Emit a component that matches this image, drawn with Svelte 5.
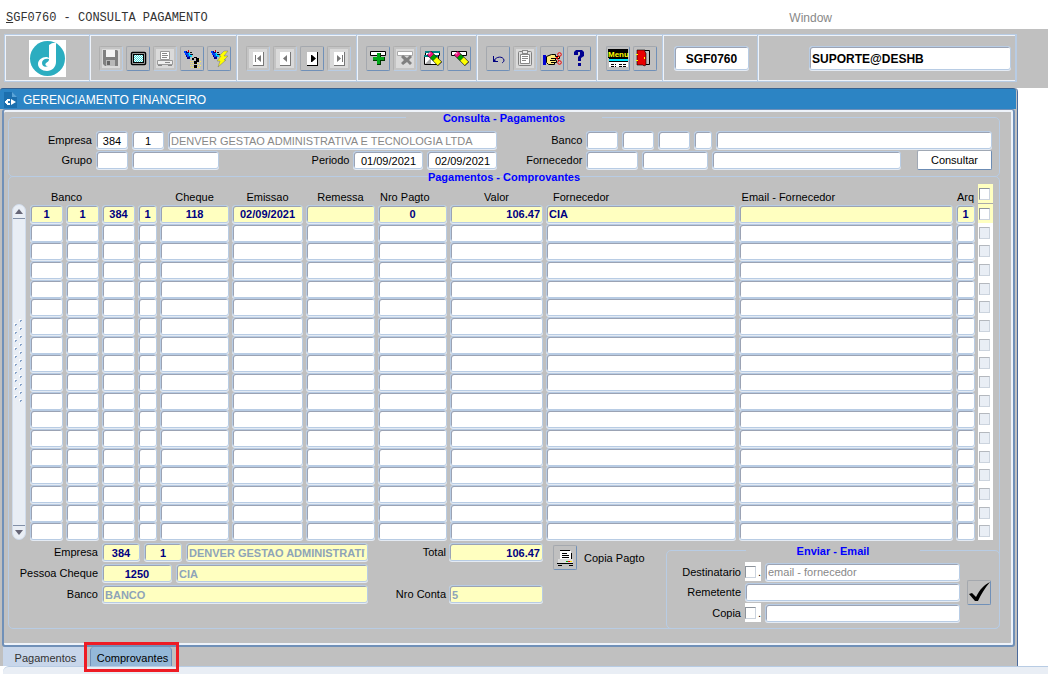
<script lang="ts">
	type Tool = { name: string; icon: string; off?: boolean };

	const brush =
		'<path d="M4 5h3v1h2v2h3v3h-2v2H7v-2H6V9H5V7H4z" fill="#000080"/><path d="M4 5h2v2h2v2h1v2H7V9H5V7H4z" fill="#0040ff"/><path d="M8 7h2v2h2v2h-1l-2-1z" fill="#00e0ff"/><path d="M8 4h1v2H8z" fill="#e00000"/><path d="M10 6h2v1h-2zM11 8h2v1h-2z" fill="#111"/>';
	const page = '<path d="M7 6h10v13H7z" fill="#fff"/><path d="M17 6h1v14H7v-1h10z" fill="#777"/>';
	const pencil =
		'<path d="M9 7l11 11" stroke="#111" stroke-width="6"/><path d="M9 7l3 3" stroke="#f0107e" stroke-width="5"/><path d="M9 7l1 1" stroke="#ff9ad0" stroke-width="2"/><path d="M12 10l3 3" stroke="#00a000" stroke-width="5"/><path d="M15 13l4.500 4.500" stroke="#ff0" stroke-width="5"/>';

	const groups: Tool[][] = [
		[
			{
				name: 'Salvar',
				off: true,
				icon: '<path d="M4 4h14l1 1v15H6l-2-2z" fill="#808080"/><path d="M7 4h9v7H7z" fill="#f4f4f4"/><path d="M7 14h9v6H7z" fill="#b8b8b8"/><path d="M8 15h3v4H8z" fill="#666"/>'
			},
			{
				name: 'Tela',
				icon: '<rect x="5.500" y="6.500" width="14" height="12" rx="1" fill="#c8c8c8" stroke="#000" stroke-width="1.500"/><rect x="7.500" y="8.500" width="10" height="8" fill="#fff" stroke="#000"/><path d="M8 9.500h9M8 11.500h9M8 13.500h9M8 15.500h9" stroke="#40d8d8" stroke-dasharray="1 1"/><path d="M9 10.500h8M9 12.500h8M9 14.500h8" stroke="#40d8d8" stroke-dasharray="1 1"/>'
			},
			{
				name: 'Imprimir',
				off: true,
				icon: '<path d="M7.500 5.500h9v8h-9z" fill="#fff" stroke="#999"/><path d="M9 7h5v1H9zM9 9h6v1H9zM9 11h5v1H9z" fill="#888"/><path d="M4.500 14.500h15v4h-15z" fill="#eee" stroke="#999"/><path d="M12 16h5v1h-5zM5 19h4v1H5zM15 19h4v1h-4z" fill="#888"/>'
			},
			{
				name: 'Entrar consulta',
				icon: `<path d="M10 15.500h11M11 17.500h10M10 19.500h11M11 21.500h9M17 13.500h4" stroke="#ffee55" stroke-dasharray="1 1"/>${brush}<path d="M12 12h2v-1h3v1h2v4h-2v2h-3v-3h2v-3h-2v2h-2zM14 19h3v3h-3z" fill="#000"/>`
			},
			{
				name: 'Executar consulta',
				icon: `${brush}<path d="M17 5h4l-4 5h4l-4 4h2l-8 7 2-6h-3l4-5h-2z" fill="#ff0" stroke="#777" stroke-width=".5"/>`
			}
		],
		[
			{ name: 'Primeiro', off: true, icon: `${page}<path d="M9 9h1v7H9zM15 9v7l-4-3.500z" fill="#777"/>` },
			{ name: 'Anterior', off: true, icon: `${page}<path d="M14 9v7l-4-3.500z" fill="#777"/>` },
			{ name: 'Proximo', icon: `${page}<path d="M17 6h1v14H7v-1h10zM11 9h1l4 3.500-4 3.500h-1z" fill="#000"/>` },
			{ name: 'Ultimo', off: true, icon: `${page}<path d="M10 9l4 3.500-4 3.500zM15 9h1v7h-1z" fill="#777"/>` }
		],
		[
			{
				name: 'Inserir registro',
				icon: '<path d="M4.500 5.500h15v4h-15z" fill="#fff" stroke="#000"/><path d="M11 7h4v4h4v4h-4v4h-4v-4H7v-4h4z" fill="#003800"/><path d="M11 7h3v4h4v3h-4v4h-3v-4H7v-3h4z" fill="#00a818"/>'
			},
			{
				name: 'Remover registro',
				off: true,
				icon: '<path d="M4.500 5.500h15v4h-15z" fill="#fff" stroke="#aaa"/><path d="M10 9l4 3 3-3 2 2-3 3 3 3-2 2-3-3-4 3-2-2 3-3-3-3z" fill="#808080"/>'
			},
			{
				name: 'Limpar bloco',
				icon: `<path d="M5.500 5.500h14v4h-14zM4.500 9.500h14v9h-14z" fill="#fff" stroke="#000"/><path d="M5 5h15v2H5zM4 9h14v2H4z" fill="#008080"/><path d="M5 18l6-6v6z" fill="#aaa"/>${pencil}`
			},
			{
				name: 'Limpar registro',
				icon: `<path d="M4.500 5.500h15v4h-15z" fill="#fff" stroke="#000"/>${pencil}`
			}
		],
		[
			{
				name: 'Desfazer',
				icon: '<path d="M7.500 10v5.500H12M8 15c2-5 9-5 10-1 0 2-1 2-2 3" fill="none" stroke="#000080"/><path d="M7 12l4 4H7z" fill="#000080"/>'
			},
			{
				name: 'Colar',
				off: true,
				icon: '<rect x="5.500" y="5.500" width="13" height="14" rx="1" fill="#e0e0e0" stroke="#808080"/><path d="M7.500 8.500h9v9h-9z" fill="#fff" stroke="#888"/><path d="M9 4h6v4H9z" fill="#888"/><path d="M10 5h4v2h-4z" fill="#eee"/><path d="M9 10h6v1H9zM9 12h6v1H9zM9 14h4v1H9z" fill="#888"/>'
			},
			{
				name: 'Recortar',
				icon: '<path d="M3 9h3v10H3z" fill="#0000d0"/><path d="M6.500 10.500l5-2h4v2h4v2h-4v2h1v2h-2v2h-6l-2-2z" fill="#ffe97a" stroke="#000"/><path d="M11 12.500h5M10 14.500h5M11 16.500h4" stroke="#000"/><path d="M16 13l3-3M16 11l3 4" stroke="#e00" fill="none"/><circle cx="19.500" cy="8.500" r="1.800" fill="none" stroke="#e00"/><circle cx="19.500" cy="16.500" r="1.800" fill="none" stroke="#e00"/>'
			},
			{
				name: 'Ajuda',
				icon: '<path d="M7 9V6l2-2h6l2 2v4l-3 2v3h-3v-4l2-2V6h-2v3zM11 17h3v3h-3z" fill="#000090"/>'
			}
		],
		[
			{
				name: 'Menu',
				icon: '<path d="M2 3h20v9H2z" fill="#000"/><text x="2" y="11" font-family="Liberation Sans, sans-serif" font-size="8" font-weight="700" fill="#ff0">Menu</text><path d="M3 13h19v8H3z" fill="#fff"/><path d="M3 13h19v2H3z" fill="#00e8ff"/><path d="M3 12h19v1H3zM3 15h19v1H3z" fill="#000"/><path d="M5 18.500h5M13 18.500h8M5 20.500h5M13 20.500h8" stroke="#000" stroke-dasharray="3 1"/>'
			},
			{
				name: 'Sair',
				icon: '<path d="M5.500 4.500h11v14h-11z" fill="#c0c0c0" stroke="#000"/><path d="M4 4h8v2l1 1v12l-2 1-1-1H4z" fill="#e80000" stroke="#000" stroke-width=".6"/><path d="M3 8h2v1H3zM3 14h2v1H3zM11 11h1v2h-1z" fill="#ff0"/>'
			}
		]
	];

	const rows = Array.from({ length: 18 }, (_, i) =>
		i === 0
			? ['1', '1', '384', '1', '118', '02/09/2021', '', '0', '106.47', 'CIA', '', '1']
			: Array(12).fill('')
	);
	const columns = [
		'Banco', 'Agencia', 'Conta', 'Digito', 'Cheque', 'Emissao', 'Remessa',
		'Nro Pagto', 'Valor', 'Fornecedor', 'Email', 'Arq'
	];
</script>

<header class="menubar">
	<span class="app-name"><u>S</u>GF0760 - CONSULTA PAGAMENTO</span>
	<span class="window-menu">Window</span>
</header>

<div class="toolbar">
	<div class="toolbar-frame">
		<div class="cell logo">
			<svg width="37" height="37" viewBox="0 0 37 37">
				<rect width="37" height="37" fill="#fff" />
				<circle cx="18.500" cy="18.500" r="17.500" fill="#2badc0" />
				<path d="M20 5q4-3 7-2v19c0 5-4 9-9 9s-9-3-9-7 4-7 8-7c1 0 2 0 3 1z" fill="#fff" />
				<path d="M20 19c-4-1-7 1-7 4s3 5 6 3c-3 0-3-2-2-3s3-1 3-4z" fill="#2badc0" />
			</svg>
		</div>
		{#each groups as group}
			<div class="cell tools">
				{#each group as tool}
					<button class="tool" class:off={tool.off} disabled={tool.off} aria-label={tool.name}>
						<svg width="22" height="23" viewBox="1 1 22 23">{@html tool.icon}</svg>
					</button>
				{/each}
			</div>
		{/each}
		<div class="cell code"><input class="field" aria-label="Programa" value="SGF0760" /></div>
		<div class="cell user"><input class="field" aria-label="Usuario" value="SUPORTE@DESHB" /></div>
	</div>
</div>

<main class="window">
	<div class="titlebar">
		<svg width="13" height="16" viewBox="0 0 13 16">
			<path d="M0 0h8l5 5v11H0z" fill="#1c6fae" />
			<path d="M8 0v5h5z" fill="#5aa4d8" />
			<path d="M6 7H3v1H2v1H1v2h1v1h1v1h3v-2H4V9h2zM7 7l5 3-5 3z" fill="#fff" />
		</svg>
		<span>GERENCIAMENTO FINANCEIRO</span>
	</div>

	<div class="canvas">
		<fieldset class="query">
			<legend>Consulta - Pagamentos</legend>
			<div class="query-grid">
				<div class="line">
					<label class="first" for="empresa">Empresa</label>
					<input id="empresa" class="field w32 center" value="384" />
					<input class="field w32 center" aria-label="Filial" value="1" />
					<input
						class="field grow muted"
						aria-label="Nome da empresa"
						value="DENVER GESTAO ADMINISTRATIVA E TECNOLOGIA LTDA"
					/>
				</div>
				<div class="line">
					<label class="second" for="banco">Banco</label>
					<input id="banco" class="field w32" />
					<input class="field w32" aria-label="Agencia" />
					<input class="field w32" aria-label="Conta" />
					<input class="field w18" aria-label="Digito" />
					<input class="field grow" aria-label="Nome do banco" />
				</div>
				<div class="line">
					<label class="first" for="grupo">Grupo</label>
					<input id="grupo" class="field w32" />
					<input class="field w87" aria-label="Nome do grupo" />
					<label class="grow" for="periodo">Periodo</label>
					<input id="periodo" class="field w70 center" value="01/09/2021" />
					<input class="field w70 center" aria-label="Fim do periodo" value="02/09/2021" />
				</div>
				<div class="line">
					<label class="second" for="fornecedor">Fornecedor</label>
					<input id="fornecedor" class="field w52" />
					<input class="field w66" aria-label="Filial do fornecedor" />
					<input class="field grow" aria-label="Nome do fornecedor" />
					<button class="consult">Consultar</button>
				</div>
			</div>
		</fieldset>

		<fieldset class="receipts">
			<legend>Pagamentos - Comprovantes</legend>
			<div class="listing">
				<div class="scroll">
					<button aria-label="Subir">
						<svg width="8" height="5" viewBox="0 0 8 5"><path d="M0 5h8L4 0z" fill="#667" /></svg>
					</button>
					<svg class="grip" width="10" height="84">
						<defs>
							<pattern id="dots" width="10" height="8" patternUnits="userSpaceOnUse">
								<path d="M5 0h2v2H5zM0 4h2v2H0z" fill="#fff" />
								<path d="M6 1h2v1H6zM6 2h1v1H6zM1 5h2v1H1zM1 6h1v1H1z" fill="#86a2c8" />
							</pattern>
						</defs>
						<rect width="10" height="84" fill="url(#dots)" />
					</svg>
					<button class="down" aria-label="Descer">
						<svg width="8" height="5" viewBox="0 0 8 5"><path d="M0 0h8L4 5z" fill="#667" /></svg>
					</button>
				</div>
				<table>
					<colgroup>
						<col class="c36" /><col class="c36" /><col class="c36" /><col class="c22" />
						<col class="c72" /><col class="c74" /><col class="c72" /><col class="c72" />
						<col class="c96" /><col class="supplier" /><col /><col class="c22" /><col class="c15" />
					</colgroup>
					<thead>
						<tr>
							<th colspan="4" class="bank">Banco</th>
							<th>Cheque</th>
							<th>Emissao</th>
							<th>Remessa</th>
							<th class="number">Nro Pagto</th>
							<th>Valor</th>
							<th class="left">Fornecedor</th>
							<th class="left mail">Email - Fornecedor</th>
							<th class="arq">Arq</th>
							<th class="tick"><input type="checkbox" aria-label="Marcar todos" /></th>
						</tr>
					</thead>
					<tbody>
						{#each rows as row, r}
							<tr class:current={r === 0}>
								{#each row as value, c}
									<td>
										<input
											class="field"
											class:center={c < 8 || c === 11}
											class:right={c === 8}
											aria-label={`${columns[c]} ${r + 1}`}
											{value}
										/>
									</td>
								{/each}
								<td class="tick">
									<input type="checkbox" disabled={r > 0} aria-label={`Marcar linha ${r + 1}`} />
								</td>
							</tr>
						{/each}
					</tbody>
				</table>
			</div>

			<div class="details">
				<div class="summary">
					<div class="line">
						<label class="side" for="empresa2">Empresa</label>
						<input id="empresa2" class="field yellow center w38" value="384" />
						<input class="field yellow center w38" aria-label="Filial" value="1" />
						<input
							class="field yellow grow faded"
							aria-label="Nome da empresa"
							value="DENVER GESTAO ADMINISTRATIVA E TECNOLOGIA LTDA"
						/>
					</div>
					<div class="line">
						<label class="side" for="pessoa">Pessoa Cheque</label>
						<input id="pessoa" class="field yellow center w70" value="1250" />
						<input class="field yellow grow faded" aria-label="Nome da pessoa" value="CIA" />
					</div>
					<div class="line">
						<label class="side" for="banco2">Banco</label>
						<input id="banco2" class="field yellow grow faded" value="BANCO" />
					</div>
				</div>
				<div class="totals">
					<div class="line">
						<label for="total">Total</label>
						<input id="total" class="field yellow right" value="106.47" />
					</div>
					<div class="line">
						<label for="conta">Nro Conta</label>
						<input id="conta" class="field yellow faded" value="5" />
					</div>
				</div>
				<div class="print">
					<button class="tool" id="copy" aria-label="Copia Pagto">
						<svg width="22" height="23" viewBox="1 1 22 23">
							<path d="M7 6h11v8H7z" fill="#fff" />
							<path d="M7 5h10v1H7zM18 8h1v6h-1zM9 8h5v1H9zM9 10h7v1H9zM9 12h7v1H9z" fill="#000" />
							<path d="M5 14h15v5H5z" fill="#ddd" />
							<path d="M4 18h16v1H4zM5 20h4v1H5zM16 20h4v1h-4z" fill="#000" />
							<path d="M13 16h2v1h-2z" fill="#0a0" />
							<path d="M15 16h2v1h-2z" fill="#e00" />
							<path d="M17 16h2v1h-2z" fill="#fd0" />
						</svg>
					</button>
					<label for="copy">Copia Pagto</label>
				</div>
				<fieldset class="email">
					<legend>Enviar - Email</legend>
					<div class="email-body">
						<div class="email-lines">
							<div class="line">
								<label for="dest">Destinatario</label>
								<span class="tickbox"><input type="checkbox" aria-label="Usar destinatario" />.</span>
								<input id="dest" class="field grow muted" value="email - fornecedor" />
							</div>
							<div class="line">
								<label for="remet">Remetente</label>
								<input id="remet" class="field grow" />
							</div>
							<div class="line">
								<label for="copia">Copia</label>
								<span class="tickbox"><input type="checkbox" aria-label="Usar copia" />.</span>
								<input id="copia" class="field grow" />
							</div>
						</div>
						<button class="tool" aria-label="Enviar">
							<svg width="22" height="23" viewBox="1 1 22 23">
								<path d="M2 14l3-1 4 4C13 9 17 5 23 2 18 8 14 14 11 21H8z" fill="#000" />
							</svg>
						</button>
					</div>
				</fieldset>
			</div>
		</fieldset>
	</div>

	<nav class="tabs">
		<button class="tab">Pagamentos</button>
		<button class="tab active">Comprovantes<span class="highlight"></span></button>
	</nav>
</main>
<footer class="status"></footer>

<style>
	:global(body) {
		margin: 0;
		background: #fff;
		overflow: hidden;
	}

	:global(#app) {
		font-family: 'Liberation Sans', Arial, sans-serif;
		font-size: 11px;
		line-height: 14px;
		color: #000;
	}

	button,
	input {
		box-sizing: border-box;
		margin: 0;
		font: inherit;
		color: inherit;
	}

	button {
		padding: 0;
	}

	svg {
		display: block;
	}

	.menubar {
		display: flex;
		align-items: center;
		height: 29px;
		padding: 6px 216px 0 6px;
		box-sizing: border-box;
		justify-content: space-between;
	}

	.app-name {
		font-family: 'Liberation Mono', 'Courier New', monospace;
		font-size: 12px;
		color: #333;
	}

	.window-menu {
		font-size: 12px;
		color: #888;
	}

	.toolbar {
		height: 59px;
		padding: 5px 31px 6px 4px;
		box-sizing: border-box;
		background: #c0c0c0;
	}

	.toolbar-frame {
		display: flex;
		height: 48px;
		box-sizing: border-box;
		border: 1px solid #b8cce4;
		box-shadow: inset 0 1px #eef3fa, inset 0 -1px #eef3fa, inset 1px 0 #eef3fa;
	}

	.cell {
		display: flex;
		align-items: center;
		box-sizing: border-box;
		border-right: 1px solid #eef3fa;
		box-shadow: inset -1px 0 #b8cce4;
	}

	.logo {
		width: 86px;
		justify-content: center;
	}

	.tools {
		gap: 3px;
		padding: 0 6px 0 8px;
	}

	.tool {
		width: 24px;
		height: 25px;
		background: #c0c0c0;
		border: 1px solid;
		border-color: #a4a8ae #7090b8 #7090b8 #a4a8ae;
		border-radius: 2px;
	}

	.tool.off {
		background: #dadada;
		border-color: #b0b0b0 #b8cce4 #b8cce4 #b0b0b0;
		box-shadow: inset 0 0 0 2px #c4c4c4;
	}

	.code {
		width: 95px;
		padding: 0 9px 0 10px;
	}

	.user {
		flex: 1;
		padding: 0 5px 0 50px;
		border-right: none;
	}

	.cell .field {
		width: 100%;
		height: 24px;
		font-size: 12px;
		font-weight: bold;
	}

	.code .field {
		text-align: center;
	}

	.window {
		margin-right: 30px;
		background: #c0c0c0;
		border-right: 1px solid #4a6a9c;
		border-top-right-radius: 4px;
	}

	.titlebar {
		display: flex;
		align-items: center;
		gap: 6px;
		height: 21px;
		padding: 2px 0 0 4px;
		box-sizing: border-box;
		margin-right: 1px;
		background: #2c84c4;
		border-top: 1px solid #35608f;
		border-radius: 3px 3px 0 0;
		color: #fff;
		font-size: 12px;
	}

	.canvas {
		margin: 0 2px 0 2px;
		padding: 0 13px 16px 4px;
		border: 2px solid #7090b8;
		border-width: 1px 2px 2px;
		border-radius: 3px;
		box-shadow: inset 0 2px #eef3fa, inset -2px -2px #eef3fa;
	}

	fieldset {
		margin: 0;
		padding: 0;
		min-width: 0;
		border: 1px solid #b8cce4;
		border-radius: 5px;
	}

	legend {
		width: 196px;
		margin: 0 auto;
		padding: 2px 0 0;
		text-align: center;
		font-weight: bold;
		color: #00f;
	}

	.query {
		margin-top: -1px;
	}

	.query-grid {
		display: grid;
		grid-template-columns: 488fr 494fr;
		row-gap: 1px;
		padding: 6px 7px 6px 0;
	}

	.line {
		display: flex;
		align-items: center;
		gap: 4px;
	}

	.line label {
		text-align: right;
		white-space: nowrap;
	}

	.first {
		width: 83px;
	}

	.second {
		width: 85px;
	}

	.field {
		height: 18px;
		padding: 1px 2px 0;
		min-width: 0;
		background: #fff;
		border: 1px solid #b8cce4;
		border-radius: 3px;
		box-shadow: inset 1px 1px #9ba3b4, 0 1px #e4ebf4;
		outline: none;
	}

	.grow {
		flex: 1;
	}

	.center {
		text-align: center;
	}

	.right {
		text-align: right;
	}

	.muted {
		color: #888;
	}

	.w18 { width: 18px; }
	.w32 { width: 32px; }
	.w38 { width: 38px; }
	.w52 { width: 52px; }
	.w66 { width: 66px; }
	.w70 { width: 70px; }
	.w87 { width: 87px; }

	.consult {
		width: 75px;
		height: 20px;
		margin-left: 12px;
		background: #fff;
		border: 1px solid;
		border-color: #a0a8b4 #6c8cb4 #6c8cb4 #a0a8b4;
		border-radius: 2px;
	}

	.receipts {
		margin-top: -9px;
	}

	.listing {
		display: flex;
		gap: 4px;
		padding: 0 6px 0 3px;
	}

	.scroll {
		display: flex;
		flex-direction: column;
		align-items: center;
		justify-content: space-between;
		width: 14px;
		margin-top: 20px;
		box-sizing: border-box;
		background: #e9eef5;
		border-radius: 7px;
		border: 1px solid #d0dcec;
	}

	.scroll button {
		display: grid;
		place-items: center;
		width: 12px;
		height: 14px;
		background: none;
		border: none;
		border-bottom: 1px solid #8290a8;
	}

	.scroll .down {
		border-bottom: none;
		border-top: 1px solid #8290a8;
	}

	.grip {
		margin-bottom: 22px;
	}

	table {
		flex: 1;
		width: 0;
		table-layout: fixed;
		border-collapse: collapse;
	}

	.c15 { width: 15px; }
	.c22 { width: 22px; }
	.c36 { width: 36px; }
	.c72 { width: 72px; }
	.c74 { width: 74px; }
	.c96 { width: 96px; }
	.supplier { width: 20%; }

	th {
		height: 20px;
		padding: 6px 3px 0 0;
		box-sizing: border-box;
		font-weight: normal;
		line-height: 14px;
		white-space: nowrap;
	}

	.bank {
		text-align: left;
		padding-left: 21px;
	}

	.number {
		text-align: left;
		padding-left: 2px;
	}

	.left {
		text-align: left;
		padding-left: 7px;
	}

	.mail {
		padding-left: 3px;
	}

	.arq {
		padding-right: 4px;
		text-align: right;
	}

	td {
		height: 19px;
		padding: 0 3px 0 0;
		line-height: 0;
	}

	tbody tr:nth-child(3n) td {
		height: 18px;
	}

	td .field {
		width: 100%;
		line-height: 14px;
		font-weight: bold;
		color: #000080;
	}

	.current .field,
	.yellow {
		background: #ffffc0;
	}

	.tick {
		padding: 0 0 0 1px;
		background: #fff;
		text-align: left;
		vertical-align: middle;
		line-height: 0;
	}

	th.tick,
	.current .tick {
		background: #ffffc0;
	}

	th.tick {
		box-shadow: inset 0 -1px #aaa;
	}

	input[type='checkbox'] {
		appearance: none;
		width: 11px;
		height: 12px;
		background: #fff;
		border: 1px solid;
		border-color: #8e949c #ccd4de #ccd4de #8e949c;
	}

	input[type='checkbox']:disabled {
		background: #e9eef5;
		border-color: #b4b8be #ccd4de #ccd4de #b4b8be;
	}

	.details {
		display: flex;
		align-items: flex-start;
	}

	.summary {
		display: flex;
		flex-direction: column;
		gap: 3px;
		width: 359px;
		padding-top: 3px;
	}

	.side {
		width: 89px;
	}

	.yellow {
		font-weight: bold;
		color: #000080;
	}

	.yellow.faded {
		color: #8ea4b8;
	}

	.totals {
		display: flex;
		flex-direction: column;
		gap: 24px;
		width: 175px;
		padding-top: 3px;
	}

	.totals label {
		flex: 1;
	}

	.totals .line {
		gap: 3px;
	}

	.totals .field {
		width: 94px;
	}

	.print {
		display: flex;
		align-items: center;
		gap: 7px;
		padding: 5px 0 0 10px;
	}

	.email {
		flex: 0 0 332px;
		margin: 2px -1px -1px auto;
	}

	.email legend {
		width: 174px;
	}

	.email-body {
		display: flex;
		align-items: center;
		gap: 7px;
		padding: 4px 8px 6px 0;
	}

	.email-lines {
		flex: 1;
		display: flex;
		flex-direction: column;
		gap: 2px;
	}

	.email-lines label {
		width: 74px;
	}

	.tickbox {
		display: flex;
		align-items: center;
		gap: 2px;
		width: 16px;
		height: 19px;
		background: #fff;
		overflow: hidden;
	}

	.tabs {
		display: flex;
		gap: 5px;
		height: 19px;
		padding-left: 3px;
	}

	.tab {
		position: relative;
		width: 82px;
		padding: 2px 0 0 3px;
		background: #c8d6ea;
		border: none;
		color: #333;
	}

	.tab.active {
		background: #94b8d8;
		border: 1px solid #7090b8;
		border-width: 0 1px;
		border-radius: 4px 4px 0 0;
		color: #000;
	}

	.highlight {
		position: absolute;
		inset: -5px -8px -6px -7px;
		border: 3px solid #ee1c24;
		z-index: 1;
	}

	.status {
		height: 12px;
		margin-left: 3px;
		background: #e9eef5;
		border-top: 1px solid #b8cce4;
		border-top-left-radius: 6px;
	}
</style>
